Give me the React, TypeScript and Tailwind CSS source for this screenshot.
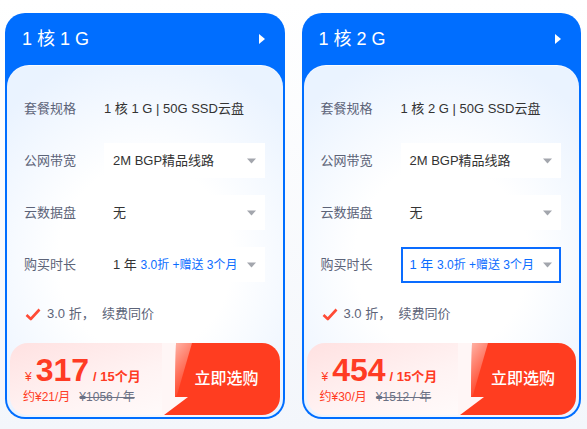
import React from "react";

type Plan = {
  title: string;
  spec: string;
  price: string;
  monthly: string;
  original: string;
  active?: boolean;
};

const plans: Plan[] = [
  { title: "1 核 1 G", spec: "1 核 1 G | 50G SSD云盘", price: "317", monthly: "约¥21/月", original: "¥1056 / 年" },
  { title: "1 核 2 G", spec: "1 核 2 G | 50G SSD云盘", price: "454", monthly: "约¥30/月", original: "¥1512 / 年", active: true },
];

function Caret() {
  return (
    <svg width="9" height="6" viewBox="0 0 9 6" className="shrink-0">
      <path d="M0 0.5 L9 0.5 L4.5 5.5 Z" fill="#a3a6ad" />
    </svg>
  );
}

function SelectBox({ children, active }: { children: React.ReactNode; active?: boolean }) {
  return (
    <div
      className={
        active
          ? "flex h-[36px] flex-1 items-center justify-between border-2 border-[#0a6cff] bg-white pl-[7px] pr-[7px]"
          : "flex h-[35px] flex-1 items-center justify-between bg-white pl-[9px] pr-[9px]"
      }
    >
      {children}
      <Caret />
    </div>
  );
}

function Row({ label, children }: { label: string; children: React.ReactNode }) {
  return (
    <div className="flex h-[35px] items-center">
      <div className="w-[80px] shrink-0 text-[13px] text-[#5c6378]">{label}</div>
      {children}
    </div>
  );
}

function Card({ plan }: { plan: Plan }) {
  return (
    <div className="flex h-[406px] flex-1 flex-col rounded-[20px] bg-[#006eff] px-[2px] pb-[2px]">
      <div className="flex h-[52px] shrink-0 items-center justify-between pl-[15px] pr-[18px]">
        <span className="text-[18px] text-white">{plan.title}</span>
        <svg width="6" height="10" viewBox="0 0 6 10">
          <path d="M0 0 L6 5 L0 10 Z" fill="#fff" />
        </svg>
      </div>
      <div className="flex flex-1 flex-col rounded-t-[22px] rounded-b-[18px] border-t border-white/80 bg-[radial-gradient(ellipse_70%_60%_at_50%_55%,#ffffff_45%,#eaf3ff_100%)] px-[3px] pb-[2px] pt-[25px]">
        <div className="flex flex-col gap-[17px] pl-[14px] pr-[15px]">
          <Row label="套餐规格">
            <span className="text-[13px] text-[#333]">{plan.spec}</span>
          </Row>
          <Row label="公网带宽">
            <SelectBox>
              <span className="text-[13px] text-[#333]">2M BGP精品线路</span>
            </SelectBox>
          </Row>
          <Row label="云数据盘">
            <SelectBox>
              <span className="text-[13px] text-[#333]">无</span>
            </SelectBox>
          </Row>
          <Row label="购买时长">
            <SelectBox active={plan.active}>
              <span className="whitespace-nowrap text-[13px]">
                <span className={plan.active ? "text-[#0a6cff]" : "text-[#333]"}>1 年 </span>
                <span className="text-[12px] text-[#0a6cff]">3.0折 +赠送 3个月</span>
              </span>
            </SelectBox>
          </Row>
        </div>
        <div className="mt-[22px] flex h-[20px] items-center gap-[6px] pl-[15px]">
          <svg width="16" height="13" viewBox="0 0 16 13">
            <path d="M1.5 7 L5.8 11 L14.5 1.5" fill="none" stroke="#ff4b36" strokeWidth="2.6" strokeLinejoin="round" />
          </svg>
          <span className="text-[13px] text-[#5c6378]">3.0 折，&nbsp;&nbsp;续费同价</span>
        </div>
        <div className="mt-[19px] flex h-[72px] overflow-hidden rounded-[18px]">
          <div className="flex flex-1 flex-col justify-center bg-[linear-gradient(160deg,#ffe1e1_0%,#fff3f3_60%,#fffafa_100%)] pl-[13px]">
            <div className="flex items-baseline pl-[2px] text-[#ff3b24]">
              <span className="mr-[4px] text-[12px]">¥</span>
              <span className="text-[32px] font-bold leading-[34px]">{plan.price}</span>
              <span className="ml-[4px] text-[13px] font-bold">/ 15个月</span>
            </div>
            <div className="mt-[1px] flex gap-[9px] text-[12px]">
              <span className="text-[#ff3b24]">{plan.monthly}</span>
              <span className="text-[#6b7184] line-through">{plan.original}</span>
            </div>
          </div>
          <div className="relative flex w-[118px] shrink-0 items-center justify-center bg-[#fff6f6]">
            <svg className="absolute inset-0" width="118" height="72" viewBox="0 0 118 72">
              <defs>
                <linearGradient id="hl" x1="0" y1="0" x2="0.4" y2="1">
                  <stop offset="0" stopColor="#ffb3a6" />
                  <stop offset="1" stopColor="#ff3d20" />
                </linearGradient>
              </defs>
              <path d="M14 0 L118 0 L118 72 L2 72 L26 54 L13 54 Z" fill="#ff3d20" />
              <path d="M14 0 L30 0 L15 52 L13 54 Z" fill="url(#hl)" />
            </svg>
            <span className="relative ml-[12px] text-[16px] font-medium text-white">立即选购</span>
          </div>
        </div>
      </div>
    </div>
  );
}

export default function App() {
  return (
    <div
      className="flex h-[429px] w-[587px] gap-[17px] bg-[linear-gradient(180deg,#ffffff_0%,#f3f6fb_100%)] pl-[5px] pr-[6px] pt-[13px]"
      style={{ fontFamily: '"Liberation Sans", "Noto Sans CJK SC", sans-serif' }}
    >
      {plans.map((p) => (
        <Card key={p.title} plan={p} />
      ))}
    </div>
  );
}
